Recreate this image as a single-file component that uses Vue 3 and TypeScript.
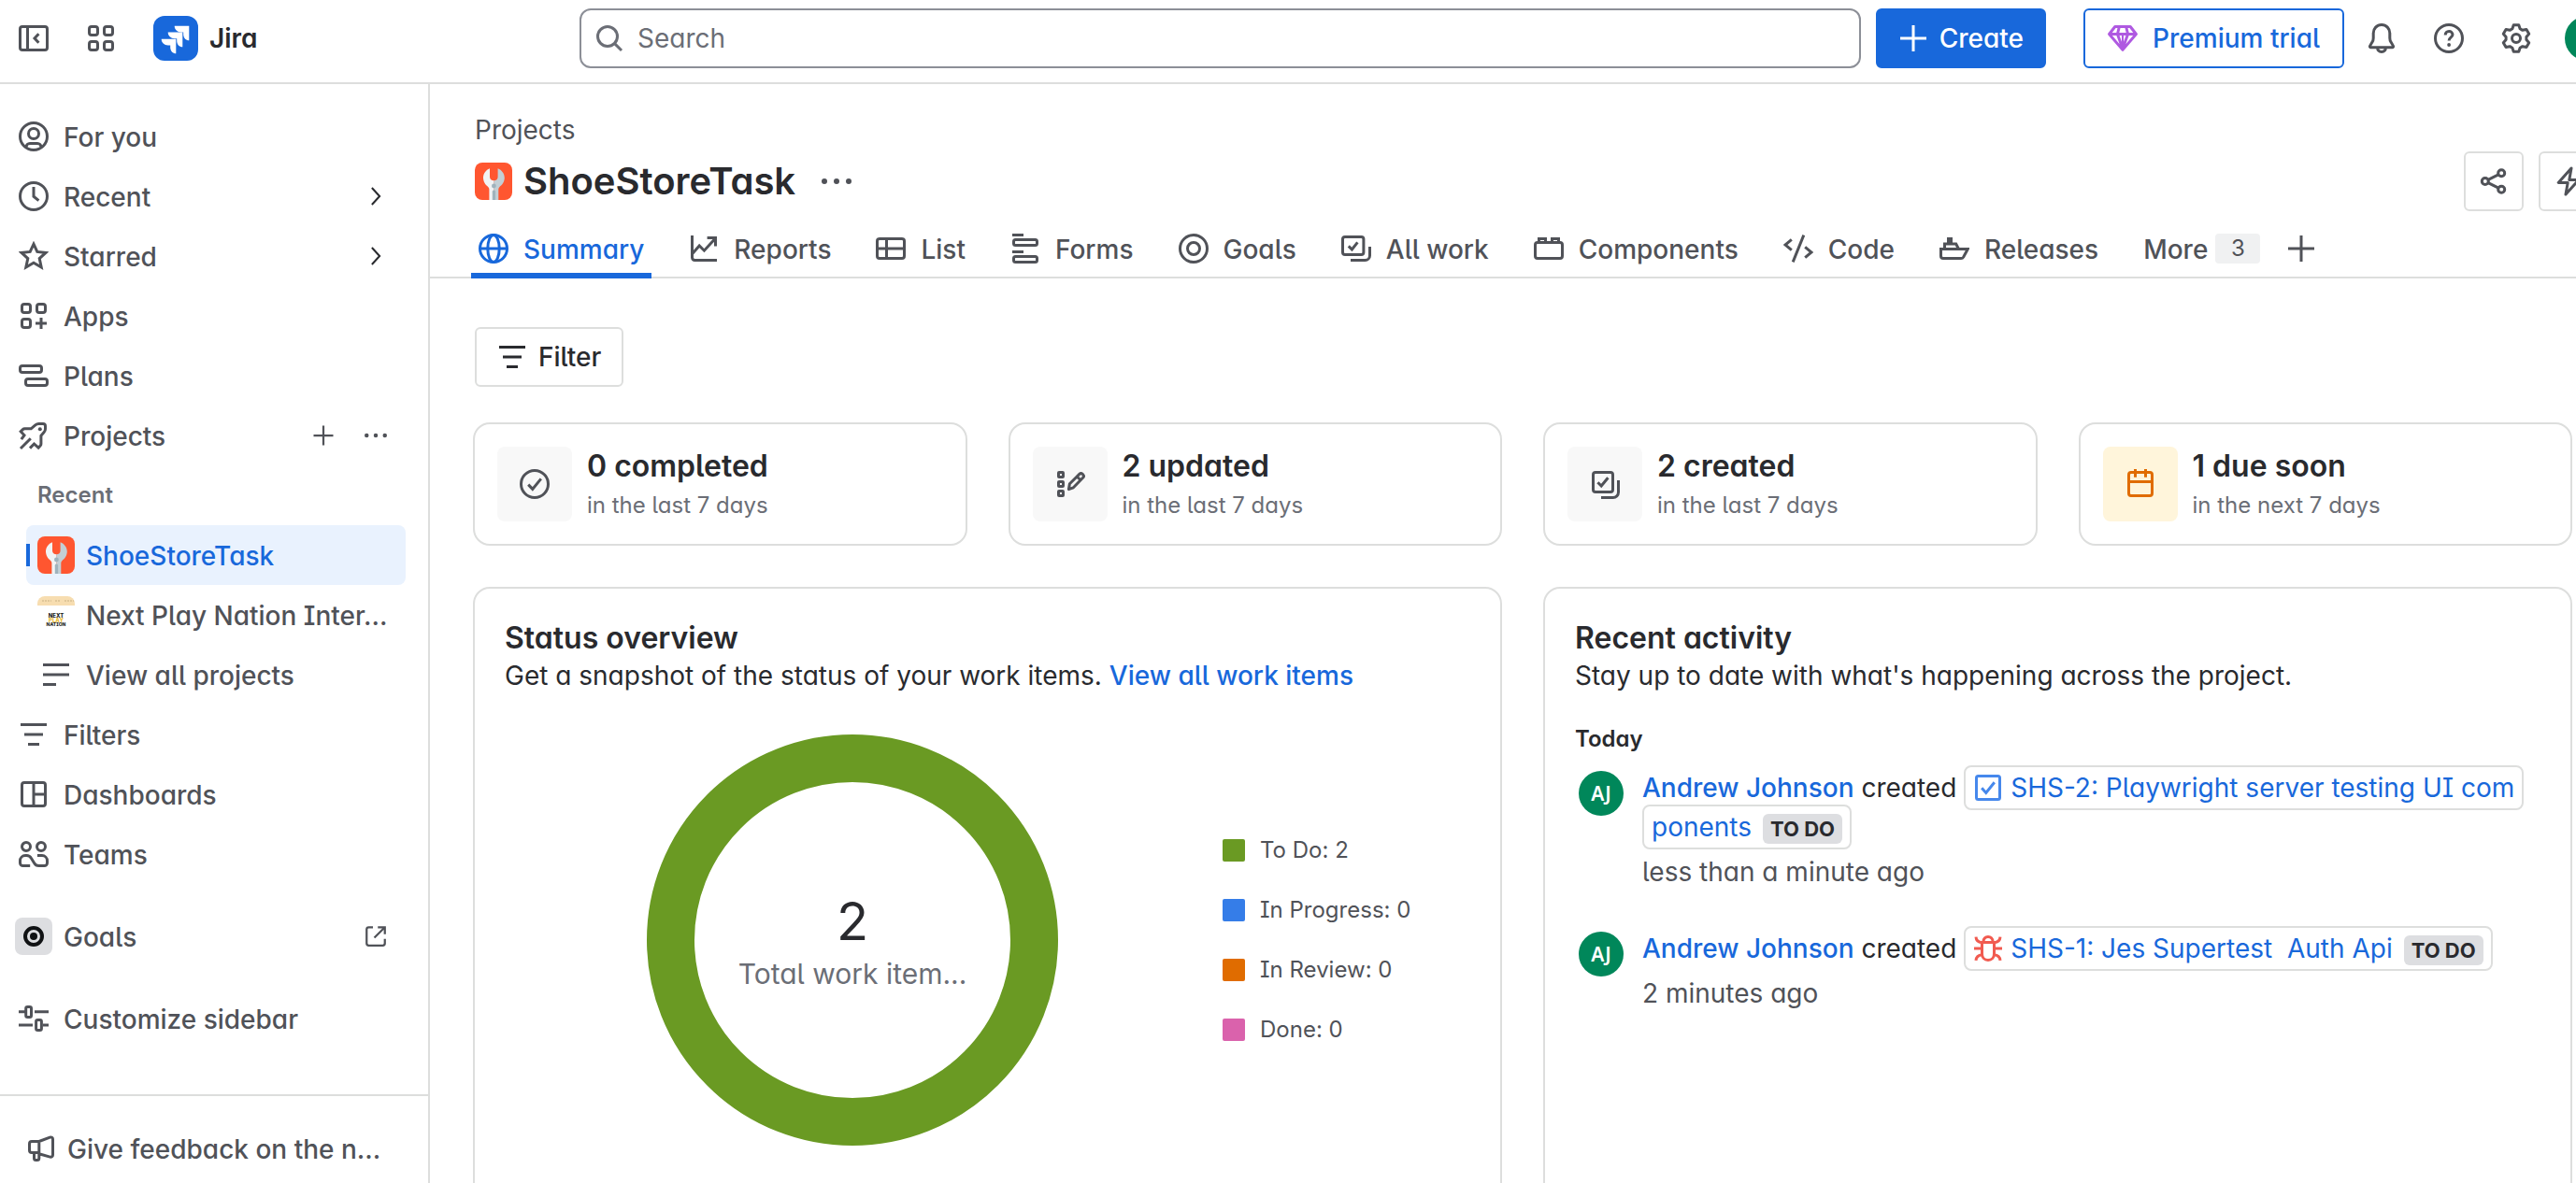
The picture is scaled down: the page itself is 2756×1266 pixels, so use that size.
<script setup lang="ts">
import { h } from 'vue'

// Builds the outline of a six-toothed cog on the 16-unit icon grid.
function cogPath(): string {
  const points: string[] = []
  for (let tooth = 0; tooth < 6; tooth++) {
    const steps: [number, number][] = [[-22, 5.5], [-11, 7.25], [11, 7.25], [22, 5.5]]
    for (const [offset, radius] of steps) {
      const angle = ((tooth * 60 - 90 + offset) * Math.PI) / 180
      points.push(`${(8 + radius * Math.cos(angle)).toFixed(2)} ${(8 + radius * Math.sin(angle)).toFixed(2)}`)
    }
  }
  return `M${points.join('L')}z`
}

const icons: Record<string, string> = {
  collapse: '<rect x=".75" y="1.75" width="14.5" height="12.5" rx="1.25"/><path d="M4.75 1.75v12.5M10.7 5.6 8.5 8l2.2 2.4"/>',
  switcher: '<rect x="1.75" y="1.75" width="4.5" height="4.5" rx="1.25"/><rect x="9.75" y="1.75" width="4.5" height="4.5" rx="1.25"/><rect x="1.75" y="9.75" width="4.5" height="4.5" rx="1.25"/><rect x="9.75" y="9.75" width="4.5" height="4.5" rx="1.25"/>',
  search: '<circle cx="7" cy="7" r="5.25"/><path d="m10.8 10.8 3.7 3.7"/>',
  plus: '<path d="M8 1v14M1 8h14"/>',
  gem: '<path d="M3.9 1.75h8.2l3.1 4L8 14.2.8 5.75zM.8 5.75h14.4M6.2 1.75l-1 4L8 13.5l2.8-7.75-1-4" stroke-linejoin="round"/><path d="M8 5.75v8" stroke-width="1"/>',
  bell: '<path d="M8 .75c-2.5 0-4.4 2-4.4 4.5v2.6c0 .8-.2 1.6-.7 2.3l-1.1 1.9c-.2.4 0 .8.5.8h11.4c.5 0 .7-.4.5-.8l-1.1-1.9c-.5-.7-.7-1.5-.7-2.3V5.25C12.4 2.75 10.5.75 8 .75zM5.75 13c.1 1.3 1 2.2 2.25 2.2s2.15-.9 2.25-2.2"/>',
  help: '<circle cx="8" cy="8" r="7.25"/><path d="M6.1 6.2c0-1.1.8-1.9 1.95-1.9 1.1 0 1.95.7 1.95 1.75C10 7.5 8.05 7.5 8.05 9.3"/><circle cx="8.05" cy="11.5" r=".95" fill="currentColor" stroke="none"/>',
  settings: `<path d="${cogPath()}" stroke-linejoin="round"/><circle cx="8" cy="8" r="2.25"/>`,
  person: '<circle cx="8" cy="8" r="7.25"/><circle cx="8" cy="6.5" r="2.75"/><path d="M4 13.9v-.2c0-1.1.9-1.95 2-1.95h4c1.1 0 2 .85 2 1.95v.2"/>',
  clock: '<circle cx="8" cy="8" r="7.25"/><path d="M8 3v5.1l2.7 2.2"/>',
  star: '<path d="m8 1.6 1.9 4.1 4.6.5-3.4 3.1 1 4.7L8 11.6 3.9 14l1-4.7L1.5 6.2l4.6-.5z"/>',
  apps: '<rect x="1.75" y="1.75" width="4.5" height="4.5" rx="1.25"/><rect x="9.75" y="1.75" width="4.5" height="4.5" rx="1.25"/><rect x="1.75" y="9.75" width="4.5" height="4.5" rx="1.25"/><path d="M12 9v6M9 12h6"/>',
  plans: '<rect x=".75" y="2.75" width="11.5" height="3.5" rx="1.25"/><rect x="3.75" y="9.75" width="11.5" height="3.5" rx="1.25"/>',
  rocket: '<path d="M1.4 10.1 3 7.9 1.1 5.9l1.1-1.1c.3-.3.6-.4 1-.4h3.4l2.3-2c.5-.4 1.1-.65 1.8-.65h2.3c.7 0 1.25.55 1.25 1.25v1.5c0 .7-.25 1.3-.7 1.8l-1.6 1.8v4.4c0 .4-.1.7-.4 1l-1 1.1-2.3-2.1L6 14.8M1 15l5.4-5.4"/><circle cx="11.4" cy="4.6" r="1" fill="currentColor" stroke="none"/>',
  filter: '<path d="M1 2.75h14M3 8h10M5 13.25h6"/>',
  lines: '<path d="M1 2.75h14M1 8h14M1 13.25h7"/>',
  dashboard: '<rect x="1.75" y="1.75" width="12.5" height="12.5" rx="1.25"/><path d="M8 1.75v12.5M8 8h6.25"/>',
  teams: '<circle cx="4" cy="4" r="2.25"/><circle cx="12" cy="4" r="2.25"/><path d="M6.1 14.25H2.25c-.8 0-1.5-.7-1.5-1.5v-1.2c0-1.5 1.2-2.8 2.8-2.8h.7c1 0 1.900.5 2.400 1.400l1.700 2.700c.5.9 1.400 1.400 2.400 1.400h3c.8 0 1.500-.7 1.500-1.500v-1.200c0-1.500-1.200-2.800-2.800-2.800h-2.500"/>',
  external: '<path d="M6 1.5H3c-.8 0-1.5.7-1.5 1.5v10c0 .8.7 1.5 1.5 1.5h10c.8 0 1.5-.7 1.5-1.5v-3.2M9.5 1.5h5v5M14.2 1.8 7 9"/>',
  sliders: '<path d="M0 4.35h3.5M8.500 4.350H16M0 11.500h7.500M13 11.500h3"/><rect x="3.85" y="1.75" width="2.9" height="5.5" rx=".9"/><rect x="9.3" y="8.75" width="2.9" height="5.5" rx=".9"/>',
  megaphone: '<path d="M6.9 4.25H3c-.7 0-1.25.55-1.25 1.25V9c0 .7.55 1.25 1.25 1.25h3.9zl5.8-2.2c.8-.3 1.55.2 1.55 1v8.4c0 .8-.7 1.3-1.5 1.1l-5.85-1.7M4.25 10.25v3c0 .6.4 1 1 1h.65c.6 0 1-.4 1-1v-3"/>',
  chevron: '<path d="m5 1.5 6 6.5-6 6.5"/>',
  dots: '<g fill="currentColor" stroke="none"><circle cx="1.5" cy="8" r="1.5"/><circle cx="8" cy="8" r="1.5"/><circle cx="14.5" cy="8" r="1.5"/></g>',
  share: '<circle cx="3.4" cy="8" r="1.75"/><circle cx="12.1" cy="3.6" r="1.75"/><circle cx="12.1" cy="12.4" r="1.75"/><path d="m5 7.2 5.5-2.8M5 8.8l5.5 2.8"/>',
  bolt: '<path d="M9.5 1 2.6 8.75h5L6.5 15l6.9-7.75h-5z" stroke-linejoin="round"/>',
  globe: '<circle cx="8" cy="8" r="7.25"/><ellipse cx="8" cy="8" rx="3.1" ry="7.25"/><path d="M.75 8h14.5"/>',
  chart: '<path d="M1.75 1v11.8c0 .8.6 1.45 1.4 1.45H15M2 10.6l3.6-4.1 2.6 2.6 5.8-6.4M9.8 2.25h4.45v4.5"/>',
  table: '<rect x=".75" y="2.75" width="14.5" height="10.5" rx="1.25"/><path d="M5.75 2.75v10.5M.75 8h14.5"/>',
  forms: '<path d="M1 .75h6M1 9.7h6"/><rect x="1.75" y="3.3" width="12.5" height="3" rx="1"/><rect x="1.75" y="12.2" width="12.5" height="3" rx="1"/>',
  target: '<circle cx="8" cy="8" r="7.25"/><circle cx="8" cy="8" r="3.25"/>',
  work: '<rect x=".75" y="1.75" width="11.2" height="9.5" rx="1.25"/><path d="M15.25 7v4.75c0 1.4-1.1 2.5-2.5 2.5H5M3.9 6.7l1.8 1.8 3-3.8"/>',
  blocks: '<rect x=".75" y="4.75" width="14.5" height="8.5" rx="1.25"/><path d="M2.75 4.75v-2h3.5v2M9.75 4.75v-2h3.5v2"/>',
  code: '<path d="M4.4 3.2 1 6l3.4 2.8M11.6 7.2 15 10l-3.4 2.8M10.9.8 5.1 15.2"/>',
  ship: '<path d="M.75 8.25h14.4l-2.3 4.2c-.3.5-.8.8-1.3.8H2c-.7 0-1.25-.5-1.25-1.25zM2.75 8.25V5.5h6.1l1.4 2.75"/><path d="M4 2h3v3H4z" fill="currentColor" stroke="none"/>',
  checkCircle: '<circle cx="8" cy="8" r="7.25"/><path d="m4.6 8.3 2.3 2.4 4.5-5.5"/>',
  editList: '<rect x="1.75" y="1.75" width="2.5" height="2.5" rx=".3"/><rect x="1.75" y="6.75" width="2.5" height="2.5" rx=".3"/><rect x="1.75" y="11.75" width="2.5" height="2.5" rx=".3"/><path d="m7.2 10.8.5-2.9 5.2-5.2c.5-.5 1.2-.5 1.7 0l.2.2c.5.5.5 1.2 0 1.7L9.7 9.9zM11.6 4l1.9 1.9" stroke-linejoin="round"/>',
  copyCheck: '<rect x="1.75" y="1.75" width="10.5" height="10.5" rx="1.25"/><path d="M15.25 6v6.4c0 1.6-1.3 2.85-2.85 2.85H6M4.2 7.1 6.1 9l3.6-4.4"/>',
  calendar: '<rect x="1.75" y="1.75" width="12.5" height="12.5" rx="1.25"/><path d="M1.75 6.7h12.5M5.25 0v4.4M10.75 0v4.4"/>',
  task: '<rect x="1.75" y="1.75" width="12.5" height="12.5" rx="1"/><path d="m4.6 8.1 2.3 2.6 4.5-5.6"/>',
  bug: '<path d="M5.5 4.3C5.5 2.7 6.6 1.75 8 1.75s2.5.95 2.5 2.55M4.75 4.75h6.5v6.1c0 1.900-1.300 3.400-3.250 3.400s-3.250-1.500-3.250-3.400zM.5 8h4.250M11.250 8h4.250M1.500 1.800c.1 1.800 1.200 2.900 3.250 3.100M14.500 1.800c-.1 1.800-1.200 2.900-3.250 3.100M1.500 14.400c.1-1.800 1.300-2.900 3.400-3.200M14.500 14.400c-.1-1.800-1.300-2.900-3.400-3.200"/>',
}

const Icon = (props: { name: string; size?: number }) =>
  h('svg', {
    class: 'icon',
    viewBox: '0 0 16 16',
    width: props.size ?? 32,
    height: props.size ?? 32,
    fill: 'none',
    stroke: 'currentColor',
    'stroke-width': 1.5,
    'aria-hidden': 'true',
    innerHTML: icons[props.name],
  })
Icon.props = ['name', 'size']

const wrench =
  '<rect width="40" height="40" fill="#ff5630"/>' +
  '<path d="M16 6.2C11.900 7.800 9 11.700 9 16.300c0 4.500 2.600 7.600 5.200 9.700.8.700 1.200 1.500 1.200 2.500V40h5.100V19.300c-2.500 0-4.500-1.600-4.500-4z" fill="#f1f3f4"/>' +
  '<path d="M24.600 6.200c4.100 1.600 7.200 5.500 7.200 10.100 0 4.500-2.700 7.600-5.300 9.700-.8.700-1.200 1.500-1.200 2.500V40h-4.900V19.300c2.500 0 4.200-1.600 4.200-4z" fill="#c3cfd5"/>' +
  '<circle cx="20.400" cy="25" r="2.400" fill="#9fb3bd"/><path d="M18.800 31.300c0-2.400 3.300-2.400 3.300 0V40h-3.300z" fill="#9fb3bd"/>'

const WrenchAvatar = () =>
  h('svg', { class: 'avatar-tile', viewBox: '0 0 40 40', width: 40, height: 40, 'aria-hidden': 'true', innerHTML: wrench })

interface NavItem { label: string; icon: string; expandable?: boolean }
const topNav: NavItem[] = [
  { label: 'For you', icon: 'person' },
  { label: 'Recent', icon: 'clock', expandable: true },
  { label: 'Starred', icon: 'star', expandable: true },
  { label: 'Apps', icon: 'apps' },
  { label: 'Plans', icon: 'plans' },
]
const lowerNav: NavItem[] = [
  { label: 'Filters', icon: 'filter' },
  { label: 'Dashboards', icon: 'dashboard' },
  { label: 'Teams', icon: 'teams' },
]
const tabs: NavItem[] = [
  { label: 'Summary', icon: 'globe' },
  { label: 'Reports', icon: 'chart' },
  { label: 'List', icon: 'table' },
  { label: 'Forms', icon: 'forms' },
  { label: 'Goals', icon: 'target' },
  { label: 'All work', icon: 'work' },
  { label: 'Components', icon: 'blocks' },
  { label: 'Code', icon: 'code' },
  { label: 'Releases', icon: 'ship' },
]
const stats = [
  { title: '0 completed', note: 'in the last 7 days', icon: 'checkCircle', warn: false },
  { title: '2 updated', note: 'in the last 7 days', icon: 'editList', warn: false },
  { title: '2 created', note: 'in the last 7 days', icon: 'copyCheck', warn: false },
  { title: '1 due soon', note: 'in the next 7 days', icon: 'calendar', warn: true },
]
const legend = [
  { label: 'To Do: 2', color: '#6a9a23' },
  { label: 'In Progress: 0', color: '#357de8' },
  { label: 'In Review: 0', color: '#e06c00' },
  { label: 'Done: 0', color: '#da62ac' },
]
</script>

<template>
  <div class="page">
    <header class="topbar">
      <div class="brand-group">
        <button class="icon-btn" aria-label="Collapse sidebar"><Icon name="collapse" /></button>
        <button class="icon-btn" aria-label="Switch apps"><Icon name="switcher" /></button>
        <a class="brand" href="#">
          <svg viewBox="0 0 48 48" width="48" height="48" aria-hidden="true">
            <rect width="48" height="48" rx="12" fill="#1868db" />
            <g fill="#fff">
              <path d="M38.300 10.700H22.700c0 3.900 3.100 6.700 7 6.700h2.500v2.400c0 3.800 2.700 6.500 6.100 6.500z" />
              <path d="M31.300 17.600H15.700c0 3.900 3.100 6.700 7 6.700h2.500v2.400c0 3.800 2.700 6.500 6.100 6.500z" />
              <path d="M24.300 24.700H8.700c0 3.900 3.100 6.700 7 6.700h2.500v2.400c0 3.800 2.700 6.500 6.100 6.500z" />
            </g>
          </svg>
          <span>Jira</span>
        </a>
      </div>
      <label class="search">
        <Icon name="search" />
        <input type="search" placeholder="Search" aria-label="Search" />
      </label>
      <button class="btn primary"><Icon name="plus" />Create</button>
      <button class="btn premium"><Icon name="gem" class="gem" />Premium trial</button>
      <div class="tools">
        <button class="icon-btn" aria-label="Notifications"><Icon name="bell" /></button>
        <button class="icon-btn" aria-label="Help"><Icon name="help" /></button>
        <button class="icon-btn" aria-label="Settings"><Icon name="settings" /></button>
        <button class="profile" aria-label="Profile"></button>
      </div>
    </header>

    <div class="body">
      <aside class="sidebar">
        <nav class="nav">
          <a v-for="item in topNav" :key="item.label" class="nav-item" href="#">
            <span class="nav-icon"><Icon :name="item.icon" /></span>
            <span class="nav-label">{{ item.label }}</span>
            <span v-if="item.expandable" class="nav-end dark"><Icon name="chevron" :size="22" /></span>
          </a>
          <div class="nav-item">
            <span class="nav-icon"><Icon name="rocket" /></span>
            <a class="nav-label" href="#">Projects</a>
            <button class="nav-end" aria-label="Create project"><Icon name="plus" :size="24" /></button>
            <button class="nav-end" aria-label="More project actions"><Icon name="dots" :size="24" /></button>
          </div>
          <div class="nested">
            <h2 class="nav-heading">Recent</h2>
            <a class="nav-item selected" href="#">
              <span class="nav-icon"><WrenchAvatar /></span>
              <span class="nav-label">ShoeStoreTask</span>
            </a>
            <a class="nav-item" href="#">
              <span class="nav-icon">
                <svg class="avatar-tile" viewBox="0 0 40 40" width="40" height="40" aria-hidden="true">
                  <rect width="40" height="40" fill="#fff" />
                  <rect width="40" height="10" fill="#f7ddb0" />
                  <path d="M5 5h10M19 5h6M29 5h10" stroke="#c9b184" stroke-width="1" stroke-dasharray="2 1" />
                  <g class="mini-logo" text-anchor="middle">
                    <text x="20" y="23" fill="#222">NEXT</text>
                    <text x="20" y="28" fill="#eab92d">PLAY</text>
                    <text x="20" y="32" class="mini-small" fill="#222">NATION</text>
                  </g>
                </svg>
              </span>
              <span class="nav-label">Next Play Nation Inter...</span>
            </a>
            <a class="nav-item" href="#">
              <span class="nav-icon"><Icon name="lines" /></span>
              <span class="nav-label">View all projects</span>
            </a>
          </div>
          <a v-for="item in lowerNav" :key="item.label" class="nav-item" href="#">
            <span class="nav-icon"><Icon :name="item.icon" /></span>
            <span class="nav-label">{{ item.label }}</span>
          </a>
          <a class="nav-item spaced" href="#">
            <span class="nav-icon goal-tile">
              <svg viewBox="0 0 24 24" width="24" height="24" aria-hidden="true">
                <circle cx="12" cy="12" r="9" fill="none" stroke="#101214" stroke-width="4" />
                <circle cx="12" cy="12" r="4" fill="#101214" />
              </svg>
            </span>
            <span class="nav-label">Goals</span>
            <span class="nav-end"><Icon name="external" :size="24" /></span>
          </a>
          <button class="nav-item spaced">
            <span class="nav-icon"><Icon name="sliders" /></span>
            <span class="nav-label">Customize sidebar</span>
          </button>
        </nav>
        <footer class="side-footer">
          <button class="feedback">
            <Icon name="megaphone" />
            <span class="nav-label">Give feedback on the n...</span>
          </button>
        </footer>
      </aside>

      <main class="main">
        <div class="project-head">
          <a class="crumb" href="#">Projects</a>
          <div class="title-row">
            <WrenchAvatar />
            <h1>ShoeStoreTask</h1>
            <button class="icon-btn" aria-label="More actions"><Icon name="dots" /></button>
            <div class="head-actions">
              <button class="btn square" aria-label="Share"><Icon name="share" /></button>
              <button class="btn square" aria-label="Automation"><Icon name="bolt" /></button>
            </div>
          </div>
        </div>
        <nav class="tabs">
          <a v-for="(tab, i) in tabs" :key="tab.label" class="tab" :class="{ active: i === 0 }" href="#">
            <Icon :name="tab.icon" /><span class="tab-label">{{ tab.label }}</span>
          </a>
          <button class="tab more"><span class="tab-label">More</span><span class="count">3</span></button>
          <button class="icon-btn" aria-label="Add tab"><Icon name="plus" /></button>
        </nav>

        <div class="content">
          <button class="btn filter"><Icon name="filter" />Filter</button>

          <section class="stats">
            <article v-for="stat in stats" :key="stat.title" class="card stat">
              <span class="stat-icon" :class="{ warn: stat.warn }"><Icon :name="stat.icon" /></span>
              <div>
                <h2>{{ stat.title }}</h2>
                <p>{{ stat.note }}</p>
              </div>
            </article>
          </section>

          <section class="panels">
            <article class="card panel">
              <h2>Status overview</h2>
              <p>Get a snapshot of the status of your work items. <a href="#">View all work items</a></p>
              <div class="overview">
                <div class="donut">
                  <svg viewBox="0 0 440 440" width="440" height="440" aria-hidden="true">
                    <circle cx="220" cy="220" r="194.500" fill="none" stroke="#6a9a23" stroke-width="51" />
                  </svg>
                  <div class="donut-text">
                    <strong>2</strong>
                    <span>Total work item...</span>
                  </div>
                </div>
                <ul class="legend">
                  <li v-for="entry in legend" :key="entry.label">
                    <i :style="{ background: entry.color }"></i>{{ entry.label }}
                  </li>
                </ul>
              </div>
            </article>

            <article class="card panel">
              <h2>Recent activity</h2>
              <p>Stay up to date with what's happening across the project.</p>
              <h3>Today</h3>
              <div class="event">
                <span class="initials">AJ</span>
                <div class="event-body">
                  <div><a class="who" href="#">Andrew Johnson</a> created <a class="chip" href="#"><Icon name="task" class="task" />SHS-2: Playwright server testing UI com<wbr />ponents<span class="lozenge">TO DO</span></a></div>
                  <time>less than a minute ago</time>
                </div>
              </div>
              <div class="event">
                <span class="initials">AJ</span>
                <div class="event-body">
                  <div><a class="who" href="#">Andrew Johnson</a> created <a class="chip" href="#"><Icon name="bug" class="bug" />SHS-1: Jes Supertest&nbsp; Auth Api<span class="lozenge">TO DO</span></a></div>
                  <time>2 minutes ago</time>
                </div>
              </div>
            </article>
          </section>
        </div>
      </main>
    </div>
  </div>
</template>

<style>
body {
  overflow: hidden;
}
</style>

<style scoped>
.page {
  --text: #292a2e;
  --subtle: #505258;
  --subtlest: #6b6e76;
  --blue: #1868db;
  --line: #dddedd;
  display: flex;
  flex-direction: column;
  height: 100vh;
  overflow: hidden;
  background: #fff;
  color: var(--text);
  font-family: Inter, "Noto Sans", sans-serif;
  font-size: 28px;
  line-height: 40px;
  font-feature-settings: "cv11", "cv05", "cv08";
}
.page *,
.page *::after {
  box-sizing: border-box;
}
h1,
h2,
h3,
p,
ul {
  margin: 0;
  padding: 0;
}
a {
  color: inherit;
  text-decoration: none;
}
button,
input {
  margin: 0;
  padding: 0;
  border: 0;
  background: none;
  color: inherit;
  font: inherit;
  font-feature-settings: inherit;
}
svg {
  display: block;
  flex: none;
}

/* top bar */
.topbar {
  display: flex;
  flex: none;
  align-items: center;
  height: 90px;
  margin-right: -44px;
  padding: 0 0 6px 4px;
  border-bottom: 2px solid var(--line);
}
.brand-group {
  display: flex;
  flex: 0 0 616px;
  align-items: center;
  gap: 8px;
}
.icon-btn {
  display: grid;
  flex: none;
  place-items: center;
  width: 64px;
  height: 64px;
  color: var(--subtle);
}
.brand {
  display: flex;
  align-items: center;
  gap: 12px;
  margin-left: 16px;
  font-weight: 600;
}
.search {
  display: flex;
  flex: 1;
  align-items: center;
  gap: 14px;
  height: 64px;
  padding: 0 14px;
  border: 2px solid #8c8f97;
  border-radius: 12px;
  color: var(--subtlest);
}
.search input {
  flex: 1;
  min-width: 0;
  outline: none;
}
.search input::placeholder {
  color: var(--subtlest);
  opacity: 1;
}
.btn {
  display: flex;
  flex: none;
  align-items: center;
  gap: 12px;
  height: 64px;
  padding: 0 22px;
  border: 2px solid var(--line);
  border-radius: 6px;
  font-weight: 500;
}
.btn.primary {
  margin-left: 16px;
  border-color: var(--blue);
  background: var(--blue);
  color: #fff;
}
.btn.premium {
  gap: 16px;
  margin: 0 8px 0 40px;
  padding: 0 24px;
  border-color: var(--blue);
  color: var(--blue);
}
.gem {
  color: #af59e1;
}
.tools {
  display: flex;
  align-items: center;
  gap: 8px;
  padding-right: 8px;
}
.profile {
  width: 48px;
  height: 48px;
  margin-left: 12px;
  border-radius: 50%;
  background: #00875a;
}

/* sidebar */
.body {
  display: flex;
  flex: 1;
  min-height: 0;
}
.sidebar {
  display: flex;
  flex: 0 0 460px;
  flex-direction: column;
  border-right: 2px solid var(--line);
  color: var(--subtle);
  font-weight: 500;
}
.nav {
  flex: 1;
  min-height: 0;
  padding: 24px 24px 0 12px;
}
.nav-item {
  position: relative;
  display: flex;
  align-items: center;
  gap: 8px;
  width: 100%;
  height: 64px;
  padding: 0 8px 0 4px;
  border-radius: 8px;
  text-align: left;
}
.nav-icon {
  display: grid;
  flex: none;
  place-items: center;
  width: 40px;
  height: 40px;
  margin-right: 4px;
}
.nav-label {
  flex: 1;
  padding-top: 2px;
  white-space: nowrap;
}
.nav-end {
  display: grid;
  place-items: center;
  width: 48px;
  height: 48px;
}
.dark {
  color: var(--text);
}
.nested {
  padding-left: 16px;
}
.nested .nav-item {
  padding-left: 12px;
}
.nav-heading {
  padding-left: 12px;
  color: var(--subtlest);
  font-size: 24px;
  font-weight: 600;
  line-height: 64px;
}
.selected {
  background: #e9f2fe;
  color: var(--blue);
}
.selected::after {
  content: "";
  position: absolute;
  left: 0;
  width: 4px;
  height: 24px;
  background: var(--blue);
}
.spaced {
  margin-top: 24px;
}
.goal-tile {
  border-radius: 8px;
  background: #dddee1;
}
.avatar-tile {
  border-radius: 8px;
}
.mini-logo {
  font-size: 6px;
  font-weight: 800;
}
.mini-small {
  font-size: 5px;
}
.side-footer {
  flex: none;
  padding: 24px 24px 5px 28px;
  border-top: 2px solid var(--line);
}
.feedback {
  display: flex;
  align-items: center;
  gap: 12px;
  height: 64px;
}

/* project header */
.main {
  flex: 1;
  min-width: 0;
}
.project-head {
  padding: 24px 0 0 48px;
}
.crumb {
  display: block;
  height: 48px;
  padding-top: 2px;
  color: var(--subtle);
  line-height: 46px;
}
.title-row {
  display: flex;
  align-items: center;
  height: 64px;
}
.title-row h1 {
  margin-left: 12px;
  font-size: 40px;
  font-weight: 600;
  line-height: 48px;
}
.title-row > .icon-btn {
  margin-left: 12px;
}
.head-actions {
  display: flex;
  gap: 16px;
  margin: 0 -24px 0 auto;
}
.btn.square {
  justify-content: center;
  width: 64px;
  padding: 0;
  color: var(--subtle);
}
.tabs {
  display: flex;
  gap: 32px;
  height: 64px;
  margin-top: 8px;
  padding-left: 44px;
  color: var(--subtle);
  font-weight: 500;
  box-shadow: inset 0 -2px var(--line);
}
.tab {
  position: relative;
  display: flex;
  align-items: center;
  gap: 16px;
  padding: 0 8px;
  white-space: nowrap;
}
.tab-label {
  padding-top: 2px;
}
.tab.active {
  color: var(--blue);
}
.tab.active::after {
  content: "";
  position: absolute;
  right: 0;
  bottom: 0;
  left: 0;
  height: 6px;
  background: var(--blue);
}
.tab.more {
  gap: 8px;
}
.tabs > .icon-btn {
  margin-left: -28px;
}
.count {
  width: 48px;
  border-radius: 4px;
  background: #f0f1f2;
  font-size: 24px;
  font-weight: 400;
  line-height: 32px;
  text-align: center;
}

/* summary */
.content {
  padding: 52px 4px 0 46px;
}
.btn.filter {
  margin-left: 2px;
}
.stats,
.panels {
  display: grid;
  grid-template-columns: repeat(4, minmax(0, 1fr));
  gap: 44px;
  margin-top: 38px;
}
.panels {
  grid-template-columns: repeat(2, minmax(0, 1fr));
  margin-top: 44px;
}
.card {
  border: 2px solid var(--line);
  border-radius: 18px;
}
.card h2 {
  font-size: 32px;
  font-weight: 600;
}
.stat {
  display: flex;
  align-items: center;
  gap: 16px;
  height: 132px;
  padding: 0 24px;
}
.stat div {
  padding-top: 2px;
}
.stat p {
  margin-top: 4px;
  color: var(--subtlest);
  font-size: 24px;
  line-height: 36px;
}
.stat-icon {
  display: grid;
  flex: none;
  place-items: center;
  width: 80px;
  height: 80px;
  border-radius: 8px;
  background: #f8f8f8;
  color: var(--subtle);
}
.stat-icon.warn {
  background: #fff5db;
  color: #e06c00;
}
.panel {
  padding: 33px 32px 64px;
}
.panel p a {
  color: var(--blue);
  font-weight: 500;
}
.overview {
  display: grid;
  grid-template-columns: minmax(0, 1fr) 265px;
  gap: 24px;
  align-items: center;
  margin-top: 43px;
}
.donut {
  position: relative;
  justify-self: center;
}
.donut-text {
  position: absolute;
  inset: 0;
  display: flex;
  flex-direction: column;
  align-items: center;
  justify-content: center;
  padding-top: 8px;
}
.donut-text strong {
  font-size: 56px;
  font-weight: 400;
  line-height: 64px;
}
.donut-text span {
  color: var(--subtlest);
  font-size: 30px;
  line-height: 48px;
}
.legend {
  color: var(--subtle);
  font-size: 24px;
  line-height: 64px;
  list-style: none;
}
.legend li {
  display: flex;
  align-items: center;
  gap: 16px;
}
.legend i {
  width: 24px;
  height: 24px;
  border-radius: 2px;
}

/* activity */
.panel h3 {
  margin: 32px 0 15px;
  font-size: 24px;
  font-weight: 600;
  line-height: 32px;
}
.event {
  display: flex;
  gap: 20px;
  margin-bottom: 40px;
  padding-left: 4px;
  line-height: 42px;
}
.event-body {
  min-width: 0;
}
.initials {
  flex: none;
  width: 48px;
  height: 48px;
  margin-top: 3px;
  border-radius: 50%;
  background: #00875a;
  color: #fff;
  font-family: "Noto Sans", sans-serif;
  font-size: 21px;
  font-weight: 600;
  line-height: 48px;
  text-align: center;
}
.who {
  color: var(--blue);
  font-weight: 500;
}
.chip {
  padding: 5px 8px;
  border: 2px solid var(--line);
  border-radius: 8px;
  color: var(--blue);
  -webkit-box-decoration-break: clone;
  box-decoration-break: clone;
}
.chip .icon {
  display: inline-block;
  margin-right: 8px;
  vertical-align: -6px;
}
.task {
  color: #4688ec;
}
.bug {
  color: #f15b50;
}
.lozenge {
  display: inline-block;
  margin-left: 12px;
  padding: 0 8px;
  border-radius: 6px;
  background: #dddee1;
  color: var(--text);
  font-size: 22px;
  font-weight: 700;
  line-height: 32px;
}
.event time {
  display: block;
  margin-top: 6px;
  color: var(--subtle);
}
</style>
